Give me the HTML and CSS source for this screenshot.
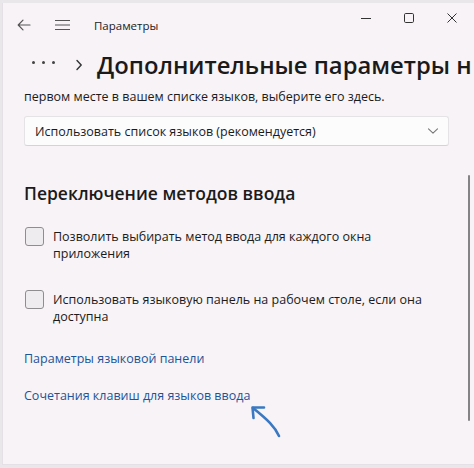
FILE: index.html
```html
<!DOCTYPE html>
<html lang="ru">
<head>
<meta charset="utf-8">
<title>Параметры</title>
<link rel="stylesheet" href="styles.css">
</head>
<body>
<div class="window">
  <div class="titlebar">
    <div class="tb-left">
      <svg class="ic back" width="14" height="12" viewBox="0 0 14 12"><path d="M13 6H1.5M6 1.2L1.2 6l4.8 4.8" fill="none" stroke="#555" stroke-width="1.2" stroke-linecap="round" stroke-linejoin="round"/></svg>
      <svg class="ic burger" width="15" height="12" viewBox="0 0 15 12"><path d="M0.5 1.5h14M0.5 6h14M0.5 10.5h14" fill="none" stroke="#555" stroke-width="1.2" stroke-linecap="round"/></svg>
      <span class="app-name">Параметры</span>
    </div>
    <div class="tb-right">
      <svg width="12" height="12" viewBox="0 0 12 12"><path d="M1 6.5h10" stroke="#333" stroke-width="1"/></svg>
      <svg width="12" height="12" viewBox="0 0 12 12"><rect x="1.5" y="1.5" width="9" height="9" rx="1.2" fill="none" stroke="#333" stroke-width="1"/></svg>
      <svg width="12" height="12" viewBox="0 0 12 12"><path d="M1.5 1.5l9 9M10.5 1.5l-9 9" stroke="#333" stroke-width="1"/></svg>
    </div>
  </div>
  <div class="crumbs">
    <span class="dots"><i></i><i></i><i></i></span>
    <svg class="chev" width="8" height="12" viewBox="0 0 8 12"><path d="M2 1.5L6.2 6 2 10.5" fill="none" stroke="#333" stroke-width="1.4" stroke-linecap="round" stroke-linejoin="round"/></svg>
    <h1 class="page-title">Дополнительные параметры н</h1>
  </div>
  <div class="content">
    <p class="desc">первом месте в вашем списке языков, выберите его здесь.</p>
    <div class="select">
      <span>Использовать список языков (рекомендуется)</span>
      <svg width="12" height="8" viewBox="0 0 12 8"><path d="M1.5 1.8L6 6.2l4.5-4.4" fill="none" stroke="#777" stroke-width="1.1" stroke-linecap="round" stroke-linejoin="round"/></svg>
    </div>
    <h2 class="section">Переключение методов ввода</h2>
    <label class="check">
      <span class="box"></span>
      <span class="check-text">Позволить выбирать метод ввода для каждого окна приложения</span>
    </label>
    <label class="check">
      <span class="box"></span>
      <span class="check-text">Использовать языковую панель на рабочем столе, если она доступна</span>
    </label>
    <a class="link first" href="#">Параметры языковой панели</a>
    <a class="link" href="#">Сочетания клавиш для языков ввода</a>
  </div>
  <div class="scrollbar"></div>
  <svg class="pointer" width="40" height="40" viewBox="0 0 40 40"><path d="M30 36 C26 27 19 20 4 8" fill="none" stroke="#3a78c2" stroke-width="2.6" stroke-linecap="round"/><path d="M15 7.5 L3.5 7.5 L4.5 18" fill="none" stroke="#3a78c2" stroke-width="2.6" stroke-linecap="round" stroke-linejoin="round"/></svg>
</div>
</body>
</html>
```
FILE: styles.css
```css
* { box-sizing: border-box; }
html, body { margin: 0; padding: 0; }
body {
  background: #e9e7ea;
  font-family: "Open Sans", "Noto Sans", sans-serif;
  color: #1b1b1b;
  width: 474px;
  height: 468px;
  overflow: hidden;
}
.window {
  position: relative;
  margin-top: 3px;
  margin-left: 2px;
  height: 462px;
  background: #f7f3f7;
  border-left: 1px solid #e4e0e5;
  border-bottom: 1px solid #e4e0e5;
  overflow: hidden;
}
.titlebar {
  display: flex;
  justify-content: space-between;
  height: 42px;
}
.tb-left {
  display: flex;
  align-items: center;
  padding-left: 14px;
  padding-top: 2px;
}
.ic.back { margin-right: 24px; }
.ic.burger { margin-right: 24px; }
.app-name {
  font-size: 11.5px;
  color: #222;
}
.tb-right {
  display: flex;
  gap: 31px;
  padding-top: 9px;
  padding-right: 16px;
}
.crumbs {
  display: flex;
  align-items: center;
  height: 40px;
  padding-left: 29px;
  white-space: nowrap;
}
.dots { flex: none; display: flex; gap: 7px; margin-right: 20px; margin-top: -6px; }
.dots i { width: 3px; height: 3px; border-radius: 50%; background: #444; display: block; }
.chev { flex: none; margin-right: 14px; }
.page-title {
  flex: none;
  margin: 0;
  font-size: 23.8px;
  font-weight: 600;
  color: #1a1a1a;
}
.content {
  padding-left: 21px;
  padding-right: 25px;
}
.desc {
  margin: 3px 0 0;
  font-size: 12.5px;
  line-height: 18px;
}
.select {
  margin-top: 10px;
  height: 30px;
  background: #fdfcfd;
  border: 1px solid #e6e3e7;
  border-bottom-color: #d6d3d7;
  border-radius: 3px;
  display: flex;
  align-items: center;
  justify-content: space-between;
  padding: 0 9px 0 10px;
  font-size: 12.5px;
}
.section {
  margin: 34px 0 0;
  font-size: 17.5px;
  font-weight: 600;
  line-height: 26px;
}
.check {
  display: flex;
  align-items: flex-start;
  margin-top: 22px;
}
.check + .check { margin-top: 29px; }
.box {
  flex: none;
  width: 19px;
  height: 19px;
  margin-top: -1px;
  border: 1px solid #8f8d90;
  border-radius: 3px;
  background: #eeecef;
  margin-right: 9px;
  margin-left: 1px;
}
.check-text {
  font-size: 12.5px;
  line-height: 17px;
  width: 375px;
}
.link {
  display: block;
  color: #1d5498;
  text-decoration: none;
  font-size: 12.5px;
  line-height: 18px;
}
.link.first { margin-top: 25px; }
.link + .link { margin-top: 19px; }
.scrollbar {
  position: absolute;
  left: 465px;
  top: 172px;
  width: 2px;
  height: 246px;
  border-radius: 1px;
  background: #858386;
}
.pointer {
  position: absolute;
  left: 246px;
  top: 397px;
}
```
